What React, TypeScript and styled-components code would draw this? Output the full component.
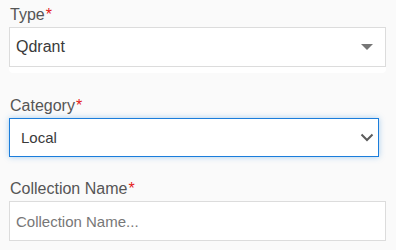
import React from "react";
import styled, { createGlobalStyle } from "styled-components";

const Global = createGlobalStyle`
  html, body { margin: 0; padding: 0; background: #fafafa; }
  body { font-family: "Liberation Sans", Arial, sans-serif; }
  * { box-sizing: border-box; }
`;

const Form = styled.div`
  display: flex;
  flex-direction: column;
  padding: 5px 0 0 9px;
  width: 396px;
`;

const Field = styled.div<{ $gap: number }>`
  display: flex;
  flex-direction: column;
  margin-bottom: ${(p) => p.$gap}px;
`;

const Label = styled.label`
  font-size: 16px;
  line-height: 19px;
  color: #555;
  margin: 0 0 3px 1px;
`;

const Req = styled.span`
  color: #e41b1b;
  margin-left: 1px;
`;

const Shell = styled.div`
  width: 377px;
  background: #ffffff;
  padding-bottom: 6px;
  border-radius: 0 0 4px 4px;
`;

const Box = styled.div<{ $width: number; $focused?: boolean; $pad: number }>`
  display: flex;
  align-items: center;
  justify-content: space-between;
  width: ${(p) => p.$width}px;
  height: ${(p) => (p.$focused ? 39 : 40)}px;
  background: #fff;
  border: 1px solid ${(p) => (p.$focused ? "#1b7ddb" : "#dcdcdc")};
  box-shadow: ${(p) => (p.$focused ? "0 0 6px rgba(27,125,219,0.35)" : "none")};
  padding: 0 ${(p) => (p.$focused ? 4 : 12)}px 0 ${(p) => p.$pad}px;
  color: #3a3a3a;
`;

const Value = styled.span<{ $size: number }>`
  font-size: ${(p) => p.$size}px;
  line-height: 20px;
`;

const TextInput = styled.input`
  width: 377px;
  height: 40px;
  background: #fff;
  border: 1px solid #dcdcdc;
  padding: 0 6px;
  font-family: "Liberation Sans", Arial, sans-serif;
  font-size: 15px;
  color: #3a3a3a;
  outline: none;
  &::placeholder { color: #777; }
`;

const Caret = () => (
  <svg width="12" height="6" viewBox="0 0 12 6">
    <path d="M0 0 H12 L6 6 Z" fill="#767676" />
  </svg>
);

const Chevron = () => (
  <svg width="14" height="9" viewBox="0 0 14 9">
    <path d="M1.5 1.5 L7 7 L12.5 1.5" fill="none" stroke="#5c5c5c" strokeWidth="2" />
  </svg>
);

export default function App() {
  return (
    <>
      <Global />
      <Form>
        <Field $gap={23}>
          <Label>
            Type<Req>*</Req>
          </Label>
          <Shell>
            <Box $width={377} $pad={6}>
              <Value $size={16}>Qdrant</Value>
              <Caret />
            </Box>
          </Shell>
        </Field>
        <Field $gap={22}>
          <Label>
            Category<Req>*</Req>
          </Label>
          <Box $width={370} $focused $pad={11}>
            <Value $size={15}>Local</Value>
            <Chevron />
          </Box>
        </Field>
        <Field $gap={0}>
          <Label>
            Collection Name<Req>*</Req>
          </Label>
          <TextInput placeholder="Collection Name..." />
        </Field>
      </Form>
    </>
  );
}
